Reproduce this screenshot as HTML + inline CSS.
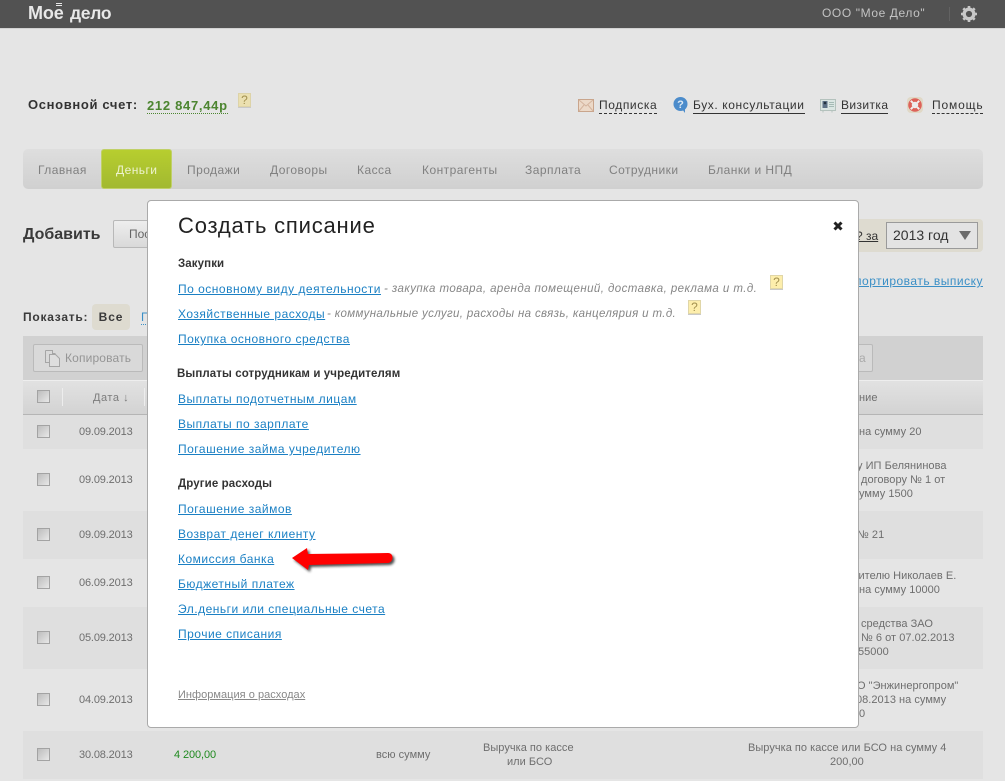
<!DOCTYPE html>
<html lang="ru"><head><meta charset="utf-8"><title>Моё дело</title>
<style>
html,body{margin:0;padding:0}
body{width:1005px;height:781px;position:relative;overflow:hidden;background:#e5e5e5;font-family:"Liberation Sans",Arial,sans-serif;font-size:12px;color:#333}
.a{position:absolute;white-space:nowrap;line-height:14px}
.row{position:absolute;left:23px;width:960px;background:#dfdfdf}
.cb{position:absolute;left:37px;width:11px;height:11px;border:1px solid #a3a3a3;background:linear-gradient(135deg,#bdbdbd,#e8e8e8)}
.d{left:79px;color:#6e6e6e;font-size:11px;letter-spacing:-.15px}
.t{color:#6e6e6e;font-size:11px;letter-spacing:.03px}
.n{top:163px;color:#808080;font-size:12px;letter-spacing:.45px}
.l{left:178px;color:#1b80c4;text-decoration:underline;font-size:12px;letter-spacing:.5px}
.h{left:178px;color:#333;font-weight:bold;font-size:11.5px;letter-spacing:.1px}
.i{color:#868686;font-style:italic;font-size:11.5px;letter-spacing:.43px}
.q{position:absolute;width:11px;height:12px;border:1px solid #e0d6a8;background:#fdeeac;color:#a39150;font:12px/12px "Liberation Sans",sans-serif;text-align:center;box-shadow:0 1px 0 #c9c9c9}
.top{top:98px;color:#333;font-size:12px;line-height:15px}
</style></head><body>

<div class="a" style="left:0;top:0;width:1005px;height:29px;background:#525252;border-bottom:1px solid #d2d2d2;box-sizing:border-box"></div>
<div class="a" style="left:28px;top:3px;font-size:18px;line-height:20px;font-weight:bold;color:#e8e8e8;letter-spacing:-.1px">Мое</div>
<div class="a" style="left:56px;top:3px;width:6px;height:1px;background:#e8e8e8;box-shadow:0 2px 0 #e8e8e8"></div>
<div class="a" style="left:70px;top:3px;font-size:17.5px;line-height:20px;font-weight:bold;color:#e8e8e8;letter-spacing:-.3px">дело</div>
<div class="a" style="left:822px;top:6px;color:#c3c3c3;font-size:12px;letter-spacing:.6px">ООО "Мое Дело"</div>
<div class="a" style="left:949px;top:7px;width:1px;height:14px;background:#626262"></div>
<svg class="a" style="left:961px;top:6px" width="16" height="16" viewBox="0 0 16 16"><circle cx="8" cy="8" r="4.8" fill="none" stroke="#c8c8c8" stroke-width="3.4"/><path d="M8 0v3M8 13v3M0 8h3M13 8h3M2.3 2.3l2.2 2.2M11.5 11.5l2.2 2.2M13.7 2.3l-2.2 2.2M4.5 11.5l-2.2 2.2" stroke="#c8c8c8" stroke-width="2.6"/></svg>

<div class="a" style="left:28px;top:98px;font-weight:bold;font-size:13px;letter-spacing:.65px;color:#333">Основной счет:</div>
<div class="a" style="left:147px;top:98px;font-weight:bold;font-size:13px;letter-spacing:.7px;color:#4c8530;border-bottom:1px dotted #4c8530;line-height:15px">212 847,44р</div>
<div class="q" style="left:238px;top:93px;background:#ebe0b0;border-color:#ddd3a8">?</div>

<svg class="a" style="left:578px;top:99px" width="16" height="13" viewBox="0 0 16 13"><rect x=".5" y=".5" width="15" height="12" fill="#ecd9c8" stroke="#c9a58c"/><path d="M1 1l7 6 7-6M1 12l5-6M15 12l-5-6" fill="none" stroke="#d4b49e"/></svg>
<div class="a top" style="left:599px;border-bottom:1px dashed #333;letter-spacing:.6px">Подписка</div>
<svg class="a" style="left:673px;top:97px" width="15" height="16" viewBox="0 0 15 16"><circle cx="7.5" cy="7" r="7" fill="#4c8ccb"/><path d="M9 12l3 4 0-5z" fill="#4c8ccb"/><text x="7.5" y="11" font-size="11" font-weight="bold" fill="#dce9f5" text-anchor="middle" font-family="Liberation Sans">?</text></svg>
<div class="a top" style="left:693px;border-bottom:1px solid #333;letter-spacing:.6px">Бух. консультации</div>
<svg class="a" style="left:820px;top:99px" width="16" height="14" viewBox="0 0 16 14"><rect x=".5" y=".5" width="15" height="11" fill="#dbe6e3" stroke="#b4c2bd"/><rect x="2.5" y="2" width="5" height="7" fill="#5d7186"/><circle cx="5" cy="4" r="1.3" fill="#22303e"/><path d="M9 3.5h5M9 5.5h5M9 7.5h5" stroke="#a5bab5"/><path d="M3 12v1.5M12 12v1.5" stroke="#b4c2bd"/></svg>
<div class="a top" style="left:841px;border-bottom:1px solid #333;letter-spacing:.4px">Визитка</div>
<svg class="a" style="left:907px;top:97px" width="16" height="16" viewBox="0 0 16 16"><rect x="0" y="0" width="16" height="16" rx="4" fill="#e0d8c6"/><circle cx="8" cy="8" r="5" fill="#ececec" stroke="#dd6259" stroke-width="3.6"/><path d="M3.8 3.8l2 2M12.2 3.8l-2 2M3.8 12.2l2-2M12.2 12.2l-2-2" stroke="#f4f0ee" stroke-width="2"/></svg>
<div class="a top" style="left:932px;border-bottom:1px dashed #333;letter-spacing:.85px">Помощь</div>

<div class="a" style="left:23px;top:149px;width:960px;height:40px;border-radius:5px;background:linear-gradient(#dedede,#d0d0d0)"></div>
<div class="a" style="left:101px;top:149px;width:69px;height:38px;border:1px solid #c0d068;border-radius:3px;background:linear-gradient(#b7ce2f,#a2b930)"></div>
<div class="a n" style="left:38px">Главная</div>
<div class="a n" style="left:116px;color:#eef3cf">Деньги</div>
<div class="a n" style="left:187px">Продажи</div>
<div class="a n" style="left:270px">Договоры</div>
<div class="a n" style="left:357px">Касса</div>
<div class="a n" style="left:422px">Контрагенты</div>
<div class="a n" style="left:525px">Зарплата</div>
<div class="a n" style="left:609px">Сотрудники</div>
<div class="a n" style="left:708px">Бланки и НПД</div>

<div class="a" style="left:23px;top:226px;font-size:16px;line-height:18px;font-weight:bold;color:#3a3a3a">Добавить</div>
<div class="a" style="left:113px;top:220px;width:50px;height:26px;border:1px solid #b8b8b8;border-radius:2px;background:linear-gradient(#eee,#d9d9d9);color:#666;font-size:12px;line-height:26px;text-indent:15px;overflow:hidden">Поступление</div>

<div class="a" style="left:840px;top:219px;width:143px;height:33px;background:#dedbd0;border-radius:0 4px 4px 0"></div>
<div class="a" style="left:856px;top:229px;color:#333;font-size:12px;text-decoration:underline;letter-spacing:0">? за</div>
<div class="a" style="left:886px;top:222px;width:90px;height:25px;border:1px solid #9a9a9a;background:#e3e3e3;font-size:14px;line-height:25px;color:#333;text-indent:6px">2013 год</div>
<div class="a" style="left:959px;top:231px;border:6px solid transparent;border-top:9px solid #6b6b6b;border-bottom:0"></div>
<div class="a" style="left:840px;top:274px;color:#3a8fc6;font-size:12px;text-decoration:underline;letter-spacing:.5px;width:143px;text-align:right;direction:rtl;overflow:hidden"><bdo dir="ltr">экспортировать выписку</bdo></div>

<div class="a" style="left:23px;top:310px;font-weight:bold;font-size:12px;letter-spacing:.75px;color:#3a3a3a">Показать:</div>
<div class="a" style="left:92px;top:304px;width:38px;height:26px;border-radius:4px;background:#dedbd0;color:#3a3a3a;font-weight:bold;font-size:12px;line-height:26px;text-align:center;letter-spacing:.9px">Все</div>
<div class="a" style="left:141px;top:310px;color:#3a8fc6;font-size:12px;border-bottom:1px dotted #3a8fc6">П</div>

<div class="a" style="left:23px;top:336px;width:960px;height:44px;background:#d1d1d1"></div>
<div class="a" style="left:33px;top:344px;width:108px;height:26px;border:1px solid #bababa;border-radius:2px;background:#d9d9d9"></div>
<svg class="a" style="left:45px;top:350px" width="15" height="17" viewBox="0 0 15 17"><path d="M.5.5h7v3h3M.5.5v12h4" fill="none" stroke="#a5a5a5"/><path d="M4.5 4.5h6l4 4v8h-10z" fill="#dedede" stroke="#a5a5a5"/></svg>
<div class="a" style="left:65px;top:351px;color:#959595;font-size:12px;letter-spacing:.15px">Копировать</div>
<div class="a" style="left:840px;top:344px;width:32px;height:26px;border:1px solid #bababa;border-radius:0 2px 2px 0;border-left:0;background:#d9d9d9;color:#aaa;line-height:26px;font-size:12px"><span style="margin-left:19px">а</span></div>

<div class="a" style="left:23px;top:380px;width:960px;height:35px;background:linear-gradient(#e2e2e2,#d3d3d3);border-bottom:1px solid #b5b5b5;box-sizing:border-box;box-shadow:inset 0 1px 0 #eee"></div>
<div class="cb" style="top:390px"></div>
<div class="a" style="left:62px;top:388px;width:1px;height:18px;background:#ededed"></div>
<div class="a" style="left:144px;top:388px;width:1px;height:18px;background:#ededed"></div>
<div class="a" style="left:93px;top:391px;color:#7c7c7c;font-size:11px;letter-spacing:.55px">Дата ↓</div>
<div class="a" style="left:859px;top:391px;color:#6e6e6e;font-size:11px;letter-spacing:.1px">ние</div>

<div class="row" style="top:415px;height:34px"></div>
<div class="row" style="top:511px;height:48px"></div>
<div class="row" style="top:607px;height:62px"></div>
<div class="row" style="top:731px;height:48px"></div>

<div class="cb" style="top:425px"></div><div class="a d" style="top:425px">09.09.2013</div>
<div class="cb" style="top:473px"></div><div class="a d" style="top:473px">09.09.2013</div>
<div class="cb" style="top:528px"></div><div class="a d" style="top:528px">09.09.2013</div>
<div class="cb" style="top:576px"></div><div class="a d" style="top:576px">06.09.2013</div>
<div class="cb" style="top:631px"></div><div class="a d" style="top:631px">05.09.2013</div>
<div class="cb" style="top:693px"></div><div class="a d" style="top:693px">04.09.2013</div>
<div class="cb" style="top:748px"></div><div class="a d" style="top:748px">30.08.2013</div>

<div class="a t" style="left:859px;top:425px">на сумму 20</div>
<div class="a t" style="left:857px;top:459px">у ИП Белянинова</div>
<div class="a t" style="left:861px;top:473px">договору № 1 от</div>
<div class="a t" style="left:859px;top:487px">умму 1500</div>
<div class="a t" style="left:857px;top:528px">№ 21</div>
<div class="a t" style="left:852px;top:569px">дителю Николаев Е.</div>
<div class="a t" style="left:859px;top:583px">на сумму 10000</div>
<div class="a t" style="left:861px;top:617px">средства ЗАО</div>
<div class="a t" style="left:861px;top:631px">№ 6 от 07.02.2013</div>
<div class="a t" style="left:858px;top:645px">55000</div>
<div class="a t" style="left:857px;top:679px">О "Энжинергопром"</div>
<div class="a t" style="left:856px;top:693px">08.2013 на сумму</div>
<div class="a t" style="left:859px;top:707px">0</div>

<div class="a" style="left:174px;top:748px;color:#1f8a1f;font-size:11px;letter-spacing:-.1px">4 200,00</div>
<div class="a t" style="left:376px;top:748px">всю сумму</div>
<div class="a t" style="left:483px;top:741px">Выручка по кассе</div>
<div class="a t" style="left:507px;top:755px">или БСО</div>
<div class="a t" style="left:748px;top:741px">Выручка по кассе или БСО на сумму 4</div>
<div class="a t" style="left:830px;top:755px">200,00</div>

<div class="a" style="left:147px;top:200px;width:712px;height:528px;background:#fff;border:1px solid #aaa;border-radius:4px;box-sizing:border-box"></div>
<div class="a" style="left:178px;top:213px;font-size:22px;line-height:26px;color:#222;letter-spacing:.8px">Создать списание</div>
<svg class="a" style="left:833px;top:221px" width="10" height="10" viewBox="0 0 10 10"><path d="M1.5 1.5l7 7M8.5 1.5l-7 7" stroke="#222" stroke-width="3"/></svg>

<div class="a h" style="top:257px">Закупки</div>
<div class="a l" style="top:282px">По основному виду деятельности</div>
<div class="a i" style="left:384px;top:282px">- закупка товара, аренда помещений, доставка, реклама и т.д.</div>
<div class="q" style="left:770px;top:275px">?</div>
<div class="a l" style="top:307px">Хозяйственные расходы</div>
<div class="a i" style="left:327px;top:307px;letter-spacing:.35px">- коммунальные услуги, расходы на связь, канцелярия и т.д.</div>
<div class="q" style="left:688px;top:300px">?</div>
<div class="a l" style="top:332px">Покупка основного средства</div>

<div class="a h" style="top:367px;left:177px">Выплаты сотрудникам и учредителям</div>
<div class="a l" style="top:392px">Выплаты подотчетным лицам</div>
<div class="a l" style="top:417px">Выплаты по зарплате</div>
<div class="a l" style="top:442px">Погашение займа учредителю</div>

<div class="a h" style="top:477px">Другие расходы</div>
<div class="a l" style="top:502px">Погашение займов</div>
<div class="a l" style="top:527px">Возврат денег клиенту</div>
<div class="a l" style="top:552px">Комиссия банка</div>
<div class="a l" style="top:577px">Бюджетный платеж</div>
<div class="a l" style="top:602px">Эл.деньги или специальные счета</div>
<div class="a l" style="top:627px">Прочие списания</div>
<div class="a" style="left:178px;top:688px;color:#888;font-size:11px;text-decoration:underline;letter-spacing:.03px">Информация о расходах</div>

<svg class="a" style="left:286px;top:544px" width="114" height="32" viewBox="0 0 114 32"><defs><filter id="b" x="-10%" y="-30%" width="120%" height="160%"><feGaussianBlur stdDeviation="1.3"/></filter></defs><path d="M6 14L21 4l1 6 80-1c6 0 6 9 0 10l-79 2-1 5z" fill="#222" opacity=".8" filter="url(#b)" transform="translate(2 2)"/><path d="M6 14L21 4l1 6 80-1c6 0 6 9 0 10l-79 2-1 5z" fill="#f00"/></svg>
</body></html>
